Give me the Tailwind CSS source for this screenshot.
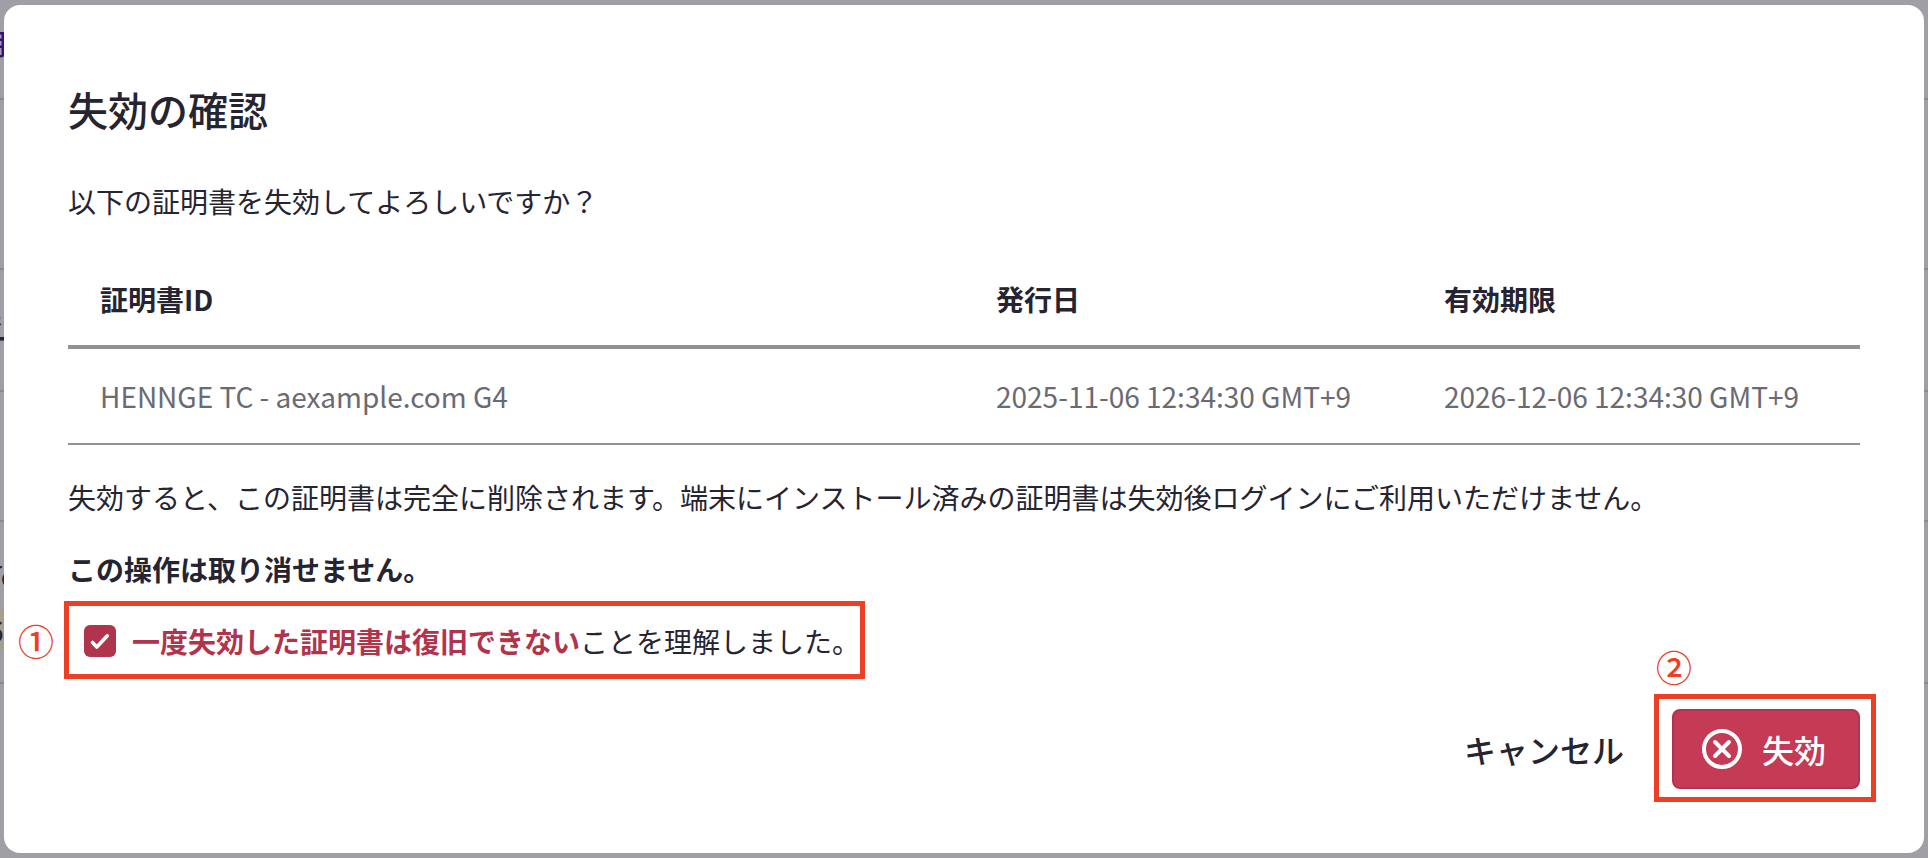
<!DOCTYPE html>
<html lang="ja">
<head>
<meta charset="utf-8">
<meta name="viewport" content="width=device-width, initial-scale=1">
<title>失効の確認</title>
<script src="https://cdn.jsdelivr.net/npm/@tailwindcss/browser@4"></script>
</head>
<body class="relative min-h-screen overflow-hidden bg-[#a09fa5] font-['Noto_Sans_CJK_JP','Noto_Sans',sans-serif] text-[28px] leading-[42px] text-[#252430]">
  <!-- Dimmed page behind the dialog -->
  <div class="absolute inset-0 overflow-hidden whitespace-nowrap" aria-hidden="true">
    <div class="h-[100px] border-b-2 border-[#8b8a94] pt-[22px]"><span class="-ml-[22px] font-medium text-[#3a0f7a]">明</span></div>
    <div class="h-[170px] border-b-2 border-[#8b8a94]"></div>
    <div class="h-[122px] border-b-2 border-[#8b8a94] pt-9"><span class="-ml-5 font-bold">え</span></div>
    <div class="h-[130px] border-b-2 border-[#8b8a94]"></div>
    <div class="h-[162px] border-b-2 border-[#8b8a94] pt-8">
      <div class="-ml-[14px] h-[56px]">Tc</div>
      <div class="-ml-3 h-10 w-10 bg-[#a79f8e] leading-10">6</div>
    </div>
  </div>

  <main role="dialog" aria-modal="true" aria-labelledby="title" class="relative mx-1 my-[5px] rounded-2xl bg-white px-16 pt-20 pb-16">
    <h1 id="title" class="text-[40px] leading-[48px] font-medium">失効の確認</h1>
    <p class="mt-[47px]">以下の証明書を失効してよろしいですか？</p>

    <table class="mt-8 w-full table-fixed border-collapse text-left">
      <thead>
        <tr class="border-b-4 border-[#929294]">
          <th class="w-1/2 px-8 pt-6 pb-[25px] font-bold">証明書ID</th>
          <th class="w-1/4 px-8 pt-6 pb-[25px] font-bold">発行日</th>
          <th class="w-1/4 px-8 pt-6 pb-[25px] font-bold">有効期限</th>
        </tr>
      </thead>
      <tbody>
        <tr class="border-b-2 border-[#929294] text-[#6b6a73]">
          <td class="px-8 py-[26px]">HENNGE TC - aexample.com G4</td>
          <td class="py-[26px] pl-8 whitespace-nowrap">2025-11-06 12:34:30 GMT+9</td>
          <td class="py-[26px] pl-8 whitespace-nowrap">2026-12-06 12:34:30 GMT+9</td>
        </tr>
      </tbody>
    </table>

    <p class="mt-[31px]">失効すると、この証明書は完全に削除されます。端末にインストール済みの証明書は失効後ログインにご利用いただけません。</p>
    <p class="mt-[30px] font-bold">この操作は取り消せません。</p>

    <div class="relative -ml-1 mt-[11px] flex w-fit items-center border-5 border-[#eb4025] pt-[14px] pb-3 pl-[15px]">
      <span class="absolute top-1/2 right-full mr-[15px] -translate-y-1/2 text-[36px] leading-none font-medium text-[#eb4025]">①</span>
      <label class="flex items-center gap-4">
        <span class="grid size-8 place-items-center">
          <input type="checkbox" checked class="col-start-1 row-start-1 size-8 appearance-none rounded-[6px] bg-[#b0344c]">
          <svg class="pointer-events-none col-start-1 row-start-1 size-8" viewBox="0 0 32 32" fill="none" stroke="#fff" stroke-width="3.600" stroke-linecap="round" stroke-linejoin="round"><path d="M8.500 17.500L12.800 22L23.300 10.800"/></svg>
        </span>
        <span><strong class="font-bold text-[#b0344c]">一度失効した証明書は復旧できない</strong>ことを理解しました。</span>
      </label>
    </div>

    <div class="mt-[30px] flex items-center justify-end gap-12 text-[32px] leading-[48px] font-medium">
      <button type="button">キャンセル</button>
      <div class="relative">
        <span class="pointer-events-none absolute -top-[15px] -right-4 -bottom-[13px] -left-[18px] border-5 border-[#eb4025]"></span>
        <span class="absolute bottom-full -left-4 mb-[25px] text-[36px] leading-none text-[#eb4025]">②</span>
        <button type="button" class="flex h-20 items-center gap-5 rounded-lg border-2 border-[#b0344c] bg-[#c53a54] pr-8 pl-7 text-white">
          <svg class="size-10" viewBox="0 0 40 40" fill="none" stroke="#fff" stroke-width="4" stroke-linecap="round" aria-hidden="true"><circle cx="20" cy="20" r="18"/><path d="M13 13L27 27M27 13L13 27"/></svg>
          失効
        </button>
      </div>
    </div>
  </main>
</body>
</html>
